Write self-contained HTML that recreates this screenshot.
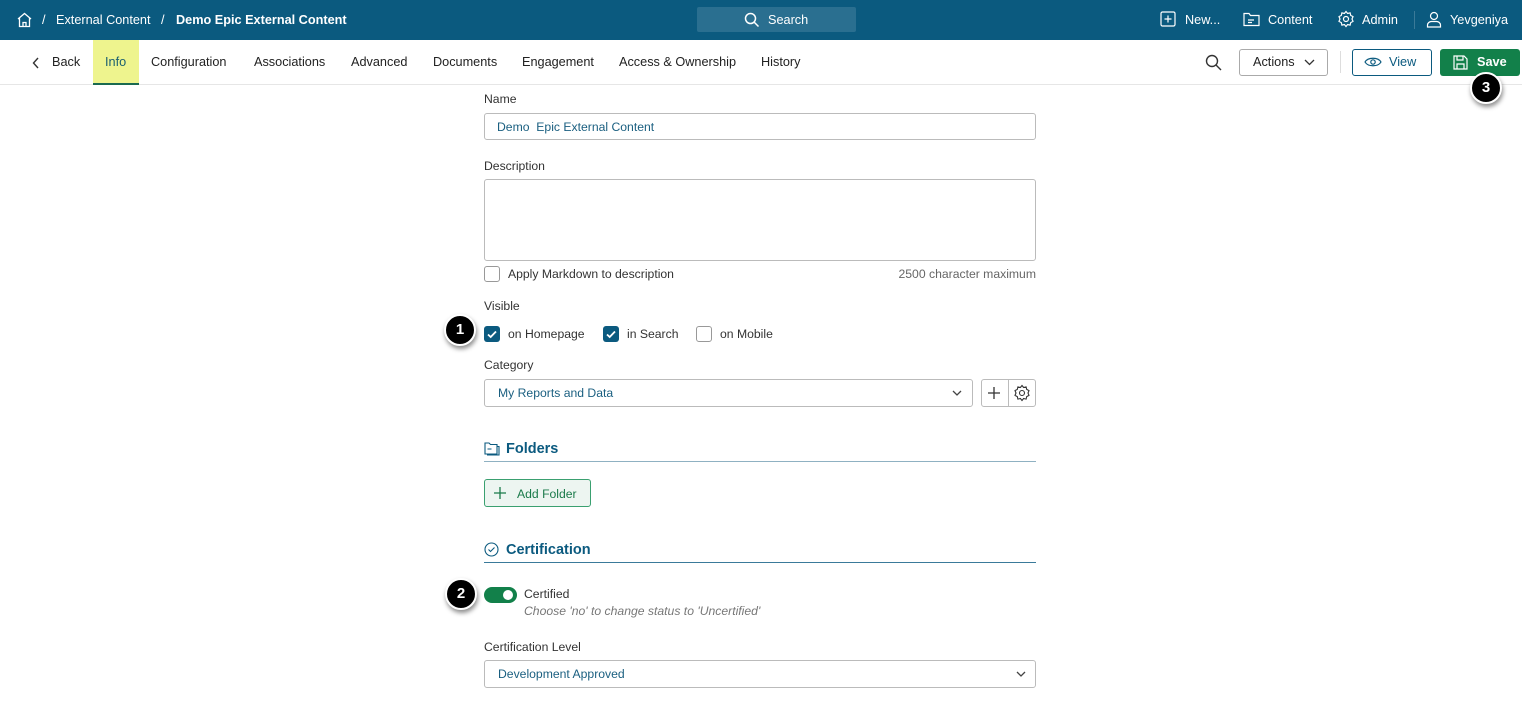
<!DOCTYPE html>
<html><head><meta charset="utf-8"><style>
*{box-sizing:border-box;margin:0;padding:0}
body{width:1522px;height:712px;overflow:hidden;background:#fff;font-family:"Liberation Sans",sans-serif;font-size:12.5px;color:#222;position:relative}
.top{position:absolute;left:0;top:0;width:1522px;height:40px;background:#0b5a7f;color:#fff}
.top span{position:absolute;top:13px;font-size:12.7px}
.search{position:absolute;left:697px;top:7px;width:159px;height:25px;background:#2a6f90;border-radius:2px}
.nav{position:absolute;top:40px;left:0;width:1522px;height:45px;border-bottom:1px solid #e6e6e6}
.nav span{position:absolute;top:15px;font-size:12.7px;color:#222}
.abs{position:absolute}
.lbl{position:absolute;font-size:12.2px;color:#333}
.inp{position:absolute;border:1px solid #bbb;border-radius:3px;background:#fff}
.cb{position:absolute;width:16px;height:16px;border-radius:3px}
.cb.on{background:#0b5a7f}
.cb.off{border:1px solid #999;background:#fff}
.badge{position:absolute;width:32px;height:32px;border-radius:50%;background:#000;color:#fff;font-weight:bold;font-size:15px;text-align:center;line-height:28px;border:2px solid #fff;box-shadow:1px 3px 5px rgba(0,0,0,.45)}
.h{position:absolute;font-size:14.5px;font-weight:bold;color:#0b5a7f}
</style></head><body>
<div class="top">
<svg class="abs" style="left:16px;top:12px" width="17" height="16" viewBox="0 0 17 16" fill="none" stroke="#fff" stroke-width="1.3"><path d="M2 7L8.5 1.5 15 7M3.5 6v8.5h10V6M7 14.5v-4h3v4"/></svg>
<span style="left:42px">/</span><span style="left:56px">External Content</span><span style="left:161px">/</span><span style="left:176px;font-weight:bold">Demo Epic External Content</span>
<div class="search"></div>
<svg class="abs" style="left:744px;top:12px" width="16" height="16" fill="none" stroke="#fff" stroke-width="1.5"><circle cx="6.5" cy="6.5" r="5"/><path d="M10 10l4.5 4.5"/></svg>
<span style="left:768px">Search</span>
<svg class="abs" style="left:1160px;top:11px" width="17" height="17" fill="none" stroke="#fff" stroke-width="1.2"><rect x="1" y="1" width="14" height="14" rx="1.5"/><path d="M8 4.5v7M4.5 8h7"/></svg>
<span style="left:1185px">New...</span>
<svg class="abs" style="left:1243px;top:11px" width="18" height="16" fill="none" stroke="#fff" stroke-width="1.2"><path d="M1 2.5h5l1.5 2H16v10H1z M5 9h6M5 11.5h4"/></svg>
<span style="left:1268px">Content</span>
<svg class="abs" style="left:1337px;top:10px" width="18" height="18" fill="none" stroke="#fff" stroke-width="1.2"><circle cx="9" cy="9" r="2.5"/><path d="M9 1.5l1.6 2 2.5-.6.6 2.5 2.3 1.2-1 2.4 1 2.4-2.3 1.2-.6 2.5-2.5-.6L9 16.5l-1.6-2-2.5.6-.6-2.5L2 11.4l1-2.4-1-2.4 2.3-1.2.6-2.5 2.5.6z"/></svg>
<span style="left:1362px">Admin</span>
<div class="abs" style="left:1414px;top:11px;width:1px;height:18px;background:#3b7a98"></div>
<svg class="abs" style="left:1426px;top:11px" width="16" height="17" fill="none" stroke="#fff" stroke-width="1.2"><circle cx="8" cy="5" r="3.5"/><path d="M1.5 16v-2c0-2 2-3.5 4-3.5h5c2 0 4 1.5 4 3.5v2z"/></svg>
<span style="left:1450px">Yevgeniya</span>
</div>
<div class="nav">
<div class="abs" style="left:93px;top:0;width:46px;height:45px;background:#eef48e;border-bottom:2px solid #1a6a50"></div>
<svg class="abs" style="left:32px;top:17px" width="8" height="12" fill="none" stroke="#333" stroke-width="1.4"><path d="M6 1L1.5 6 6 11"/></svg>
<span style="left:52px">Back</span><span style="left:105px;color:#1a5f70">Info</span><span style="left:151px">Configuration</span><span style="left:254px">Associations</span><span style="left:351px">Advanced</span><span style="left:433px">Documents</span><span style="left:522px">Engagement</span><span style="left:619px">Access &amp; Ownership</span><span style="left:761px">History</span>
<svg class="abs" style="left:1205px;top:14px" width="17" height="17" fill="none" stroke="#333" stroke-width="1.4"><circle cx="7" cy="7" r="5.5"/><path d="M11 11l5 5"/></svg>
<div class="abs" style="left:1239px;top:9px;width:89px;height:27px;border:1px solid #aaa;border-radius:3px"></div>
<span style="left:1253px">Actions</span>
<svg class="abs" style="left:1304px;top:19px" width="11" height="7" fill="none" stroke="#333" stroke-width="1.3"><path d="M1 1l4.5 4.5L10 1"/></svg>
<div class="abs" style="left:1340px;top:11px;width:1px;height:22px;background:#ddd"></div>
<div class="abs" style="left:1352px;top:9px;width:80px;height:27px;border:1px solid #0b5a7f;border-radius:3px"></div>
<svg class="abs" style="left:1364px;top:16px" width="18" height="12" fill="none" stroke="#0b5a7f" stroke-width="1.2"><path d="M1 6C4 1 14 1 17 6 14 11 4 11 1 6z"/><circle cx="9" cy="6" r="2.2"/></svg>
<span style="left:1389px;color:#0b5a7f">View</span>
<div class="abs" style="left:1440px;top:9px;width:80px;height:27px;background:#12804a;border-radius:3px"></div>
<svg class="abs" style="left:1453px;top:15px" width="15" height="15" fill="none" stroke="#fff" stroke-width="1.2"><path d="M1 1h10l3 3v10H1z M4 1v4h6V1M4 14V9h7v5"/></svg>
<span style="left:1477px;color:#fff;font-weight:bold">Save</span>
</div>
<div class="badge" style="left:1470px;top:72px">3</div>

<div class="lbl" style="left:484px;top:92px">Name</div>
<div class="inp" style="left:484px;top:113px;width:552px;height:27px"></div>
<div class="lbl" style="left:497px;top:120px;color:#1a5f80">Demo&nbsp; Epic External Content</div>
<div class="lbl" style="left:484px;top:159px">Description</div>
<div class="inp" style="left:484px;top:179px;width:552px;height:82px"></div>
<div class="cb off" style="left:484px;top:266px"></div>
<div class="lbl" style="left:508px;top:267px">Apply Markdown to description</div>
<div class="lbl" style="left:836px;width:200px;text-align:right;top:267px;color:#666">2500 character maximum</div>
<div class="lbl" style="left:484px;top:299px">Visible</div>
<div class="badge" style="left:444px;top:314px">1</div>
<div class="cb on" style="left:484px;top:326px"><svg width="16" height="16" fill="none" stroke="#fff" stroke-width="1.8"><path d="M4 8.5l2.7 2.5L12 5.5"/></svg></div>
<div class="lbl" style="left:508px;top:327px">on Homepage</div>
<div class="cb on" style="left:603px;top:326px"><svg width="16" height="16" fill="none" stroke="#fff" stroke-width="1.8"><path d="M4 8.5l2.7 2.5L12 5.5"/></svg></div>
<div class="lbl" style="left:627px;top:327px">in Search</div>
<div class="cb off" style="left:696px;top:326px"></div>
<div class="lbl" style="left:720px;top:327px">on Mobile</div>
<div class="lbl" style="left:484px;top:358px">Category</div>
<div class="inp" style="left:484px;top:379px;width:489px;height:28px"></div>
<div class="lbl" style="left:498px;top:386px;color:#1a5f80">My Reports and Data</div>
<svg class="abs" style="left:952px;top:390px" width="10" height="6" fill="none" stroke="#444" stroke-width="1.3"><path d="M1 1l4 4 4-4"/></svg>
<div class="inp" style="left:981px;top:379px;width:55px;height:28px"></div>
<div class="abs" style="left:1008px;top:380px;width:1px;height:26px;background:#bbb"></div>
<svg class="abs" style="left:987px;top:386px" width="14" height="14" stroke="#333" stroke-width="1.3"><path d="M7 1v12M1 7h12"/></svg>
<svg class="abs" style="left:1013px;top:384px" width="18" height="18" fill="none" stroke="#333" stroke-width="1.1"><circle cx="9" cy="9" r="2.5"/><path d="M9 1.5l1.6 2 2.5-.6.6 2.5 2.3 1.2-1 2.4 1 2.4-2.3 1.2-.6 2.5-2.5-.6L9 16.5l-1.6-2-2.5.6-.6-2.5L2 11.4l1-2.4-1-2.4 2.3-1.2.6-2.5 2.5.6z"/></svg>
<svg class="abs" style="left:484px;top:441px" width="16" height="15" fill="none" stroke="#0b5a7f" stroke-width="1.1"><path d="M1 2h4l1.5 1.5H13V13H1z M3.5 8h4"/><path d="M13 5.5h2V14H3"/></svg>
<div class="h" style="left:506px;top:441px">Folders</div>
<div class="abs" style="left:484px;top:461px;width:552px;height:1px;background:#8fb1c2"></div>
<div class="abs" style="left:484px;top:479px;width:107px;height:28px;border:1px solid #3aa070;border-radius:3px;background:#edf5f1"></div>
<svg class="abs" style="left:494px;top:487px" width="12" height="12" stroke="#1a7a4a" stroke-width="1.3"><path d="M6 0v12M0 6h12"/></svg>
<div class="lbl" style="left:517px;top:487px;color:#1a7a4a">Add Folder</div>
<svg class="abs" style="left:484px;top:542px" width="15" height="15" fill="none" stroke="#0b5a7f" stroke-width="1.1"><circle cx="7.5" cy="7.5" r="6.5"/><path d="M4.5 7.5l2 2 4-4"/></svg>
<div class="h" style="left:506px;top:542px">Certification</div>
<div class="abs" style="left:484px;top:562px;width:552px;height:1px;background:#3a7a9a"></div>
<div class="badge" style="left:445px;top:578px">2</div>
<div class="abs" style="left:484px;top:587px;width:33px;height:16px;border-radius:8px;background:#12804a"></div>
<div class="abs" style="left:503px;top:590px;width:10px;height:10px;border-radius:50%;background:#fff"></div>
<div class="lbl" style="left:524px;top:587px">Certified</div>
<div class="lbl" style="left:524px;top:604px;color:#777;font-style:italic">Choose 'no' to change status to 'Uncertified'</div>
<div class="lbl" style="left:484px;top:640px">Certification Level</div>
<div class="inp" style="left:484px;top:660px;width:552px;height:28px"></div>
<div class="lbl" style="left:498px;top:667px;color:#1a5f80">Development Approved</div>
<svg class="abs" style="left:1016px;top:671px" width="10" height="6" fill="none" stroke="#444" stroke-width="1.3"><path d="M1 1l4 4 4-4"/></svg>
</body></html>
